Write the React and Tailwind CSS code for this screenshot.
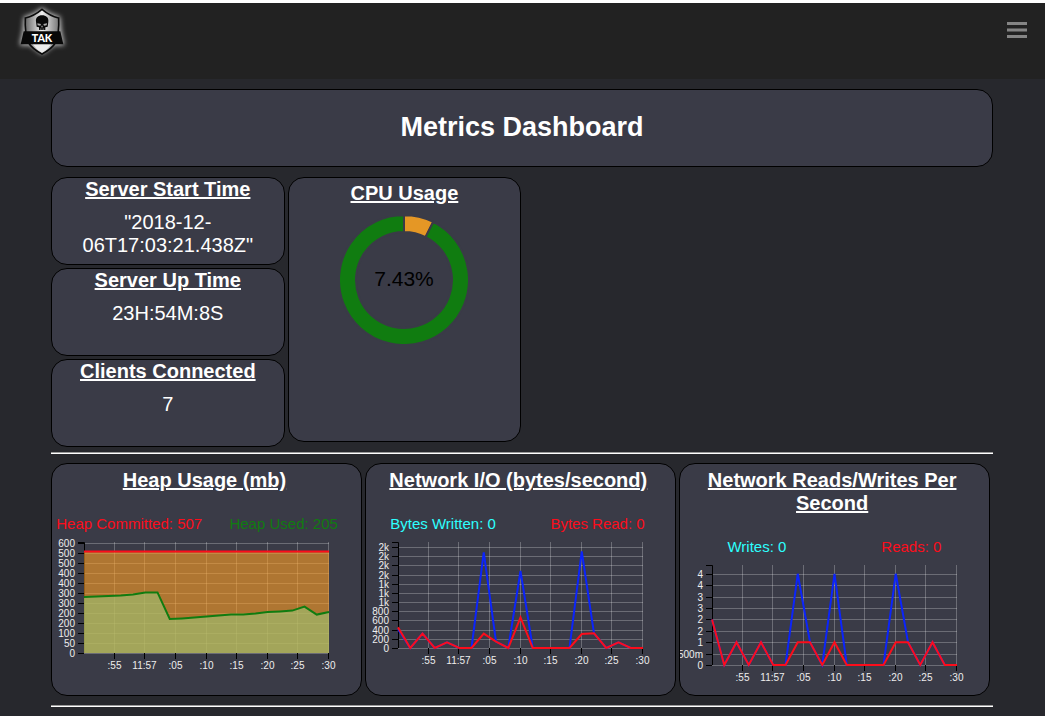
import React from "react";

const PLOT_X = 32;
const PLOT_WIDTH = 245;
const TIMES = [":55", "11:57", ":05", ":10", ":15", ":20", ":25", ":30"];

const heapUsed = [280, 283, 285, 287, 292, 302, 303, 170, 173, 177, 182, 187, 192, 193, 197, 205, 208, 212, 232, 192, 205];
const heapCommitted = heapUsed.map(() => 507);
const bytesRead = [450, 0, 313, 0, 124, 0, 0, 313, 138, 0, 669, 0, 0, 0, 0, 305, 320, 0, 124, 0, 0];
const bytesWritten = [410, 0, 313, 0, 124, 0, 0, 2087, 138, 0, 1680, 0, 0, 0, 0, 2109, 320, 0, 124, 0, 0];
const reads = [2, 0, 1, 0, 1, 0, 0, 1, 1, 0, 1, 0, 0, 0, 0, 1, 1, 0, 1, 0, 0];
const writes = [2, 0, 1, 0, 1, 0, 0, 4, 1, 0, 4, 0, 0, 0, 0, 4, 1, 0, 1, 0, 0];

function Logo() {
  return (
    <svg viewBox="0 0 180 180" className="size-[60px]" role="img" aria-label="TAK">
      <defs>
        <filter id="glow" x="-30%" y="-30%" width="160%" height="160%">
          <feGaussianBlur stdDeviation="8" />
        </filter>
        <linearGradient id="steel" x1="0" y1="0" x2="1" y2="0">
          <stop offset="0" stopColor="#666" />
          <stop offset="0.5" stopColor="#f0f0f0" />
          <stop offset="1" stopColor="#777" />
        </linearGradient>
      </defs>
      <path d="M90 20Q66 40 38 46Q36 68 34 88L26 127H54L90 154L126 127H154L146 88Q144 68 142 46Q114 40 90 20Z" fill="#c8c8c8" stroke="#c8c8c8" strokeWidth="5" filter="url(#glow)" />
      <path d="M90 22Q66 42 40 48Q38 90 48 120Q60 140 90 156Q120 140 132 120Q142 90 140 48Q114 42 90 22Z" fill="url(#steel)" stroke="#0a0a0a" strokeWidth="5" />
      <path d="M62 127H118Q108 142 90 151Q72 142 62 127Z" fill="#ececec" />
      <path d="M35 88H145L154 127H26Z" fill="#080808" />
      <path d="M72 59C70 47 79 40 90 40C102 40 111 47 109 59L107 74L100 76V84H81V76L74 74Z" fill="#080808" />
      <path d="M76 64L87 66L85 71L77 70ZM105 64L94 66L96 71L104 70ZM90 70L93 76H87Z" fill="#aaa" />
      <path d="M85 79V84M90 79V84M95 79V84" stroke="#bbb" strokeWidth="1.5" />
      <text x="90" y="119" textAnchor="middle" fill="#fff" fontSize="32" fontWeight="900" fontFamily="Lato, sans-serif">TAK</text>
    </svg>
  );
}

function Card({ title, className = "", titleClassName = "", children }) {
  return (
    <section className={`overflow-hidden rounded-[16px] border border-black bg-[#3a3b47] text-center ${className}`}>
      <h2 className={`text-[20px] leading-[23px] font-bold underline ${titleClassName}`}>{title}</h2>
      {children}
    </section>
  );
}

function Stat({ title, value }) {
  return (
    <Card title={title} className="min-h-[88px]">
      <p className="mt-[10px] px-4 text-[20px] leading-[23px]">{value}</p>
    </Card>
  );
}

function Donut() {
  const point = (radius, degrees) => {
    const a = (degrees * Math.PI) / 180;
    return `${64 + radius * Math.sin(a)} ${64 - radius * Math.cos(a)}`;
  };
  const arc = (from, to) => {
    const large = to - from > 180 ? 1 : 0;
    return `M${point(65, from)}A65 65 0 ${large} 1 ${point(65, to)}L${point(48, to)}A48 48 0 ${large} 0 ${point(48, from)}Z`;
  };
  return (
    <svg viewBox="0 0 128 128" className="mx-auto mt-[11px] size-32" role="img" aria-label="CPU usage 7.43%">
      <path d={arc(0, 26.7)} fill="#e59725" stroke="#3a3b47" strokeWidth="2" />
      <path d={arc(26.7, 360)} fill="#107c10" stroke="#3a3b47" strokeWidth="2" />
      <text x="64" y="70" textAnchor="middle" fontSize="21" fill="#000">7.43%</text>
    </svg>
  );
}

function TimeChart({ label, height, pitch, step, ticks, series }) {
  const top = 7;
  const bottom = top + height;
  const right = PLOT_X + PLOT_WIDTH;
  const x = (i) => PLOT_X + (i * PLOT_WIDTH) / 20;
  const y = (v) => bottom - (v / step) * pitch;
  const tickY = (i) => Math.round(bottom - i * pitch) + 0.5;
  const timeX = (i) => Math.round(PLOT_X + ((i + 1) * PLOT_WIDTH) / 8) - 0.5;
  const points = (data) => data.map((v, i) => `${x(i)},${y(v)}`).join(" ");
  return (
    <svg width="300" height={height + 30} className="block overflow-hidden" role="img" aria-label={label} fontSize="10" fill="#eee">
      {ticks.map((_, i) => (
        <path key={i} d={`M${PLOT_X} ${tickY(i)}H${right}`} stroke="#fff" strokeOpacity="0.25" />
      ))}
      {TIMES.map((_, i) => (
        <path key={i} d={`M${timeX(i)} ${top}V${bottom}`} stroke="#fff" strokeOpacity="0.25" />
      ))}
      <path d={`M${PLOT_X - 6} ${top + 0.5}H${PLOT_X + 0.5}V${bottom}`} fill="none" stroke="#000" />
      {ticks.map((text, i) => (
        <g key={i}>
          <path d={`M${PLOT_X - 6} ${tickY(i)}H${PLOT_X}`} stroke="#000" />
          <text x={PLOT_X - 9} y={tickY(i) + 3.5} textAnchor="end">{text}</text>
        </g>
      ))}
      {TIMES.map((text, i) => (
        <g key={i}>
          <path d={`M${timeX(i)} ${bottom}v6`} stroke="#000" />
          <text x={timeX(i)} y={bottom + 16} textAnchor="middle">{text}</text>
        </g>
      ))}
      {series.map((s) => s.area && (
        <polygon key={s.color} points={`${PLOT_X},${bottom} ${points(s.data)} ${right},${bottom}`} fill={s.area} fillOpacity={s.areaOpacity} />
      ))}
      {series.map((s) => (
        <polyline key={s.color} points={points(s.data)} fill="none" stroke={s.color} strokeWidth="2" />
      ))}
    </svg>
  );
}

function ChartCard({ title, legend, children }) {
  return (
    <Card title={title} className="min-h-[233px] w-[33%] pt-[5px]" titleClassName="pr-1">
      <div className="mt-[23px] mb-[2px] grid grid-cols-2 text-[15px] leading-[18px] whitespace-nowrap">
        {legend.map(([text, color]) => (
          <span key={text} className={color}>{text}</span>
        ))}
      </div>
      {children}
    </Card>
  );
}

function Rule() {
  return <hr className="h-[2px] border-t border-b border-t-[#9a9a9a] border-b-white" />;
}

export default function App() {
  return (
    <div className="bg-white pt-[3px] font-['Liberation_Sans',Arial,sans-serif] text-white">
      <header className="flex h-[76px] items-start justify-between bg-[#222] pr-[18px] pl-3">
        <a href="#home" className="-mt-px block"><Logo /></a>
        <button type="button" aria-label="Menu" className="mt-[19px]">
          <svg width="20" height="16" viewBox="0 0 20 16" fill="#858585">
            <path d="M0 0H20V3H0ZM0 6.5H20V9.5H0ZM0 13H20V16H0Z" />
          </svg>
        </button>
      </header>
      <main className="bg-[#27282d] pt-[10px] pr-[52px] pb-[9px] pl-[51px]">
        <div className="rounded-[16px] border border-black bg-[#3a3b47] pt-[21px] pb-[23px] text-center">
          <h1 className="text-[27px] leading-[32px] font-bold">Metrics Dashboard</h1>
        </div>

        <div className="mt-[10px] mb-[5px] flex items-start gap-[3px]">
          <div className="flex w-[24.8%] flex-col gap-[3px]">
            <Stat title="Server Start Time" value={'"2018-12-06T17:03:21.438Z"'} />
            <Stat title="Server Up Time" value="23H:54M:8S" />
            <Stat title="Clients Connected" value="7" />
          </div>
          <Card title="CPU Usage" className="min-h-[265px] w-[24.8%] pt-1">
            <Donut />
          </Card>
        </div>

        <Rule />

        <div className="my-[9px] flex gap-[3px]">
          <ChartCard
            title="Heap Usage (mb)"
            legend={[["Heap Committed: 507", "text-[#fc0d1b]"], ["Heap Used: 205", "text-[#107c10]"]]}
          >
            <TimeChart
              label="Heap usage over time"
              height={111}
              pitch={10}
              step={50}
              ticks={["0", "50", "100", "200", "200", "300", "300", "400", "400", "500", "500", "600"]}
              series={[
                { data: heapCommitted, color: "#fc0d1b", area: "#fd9f25", areaOpacity: 0.6 },
                { data: heapUsed, color: "#107c10", area: "#9bc574", areaOpacity: 0.6 },
              ]}
            />
          </ChartCard>
          <ChartCard
            title="Network I/O (bytes/second)"
            legend={[["Bytes Written: 0", "text-[#2dfffe]"], ["Bytes Read: 0", "text-[#fc0d1b]"]]}
          >
            <TimeChart
              label="Network bytes per second over time"
              height={106}
              pitch={9.17}
              step={200}
              ticks={["0", "200", "400", "600", "800", "1k", "1k", "1k", "2k", "2k", "2k", "2k"]}
              series={[
                { data: bytesWritten, color: "#0b24fb" },
                { data: bytesRead, color: "#fc0d1b" },
              ]}
            />
          </ChartCard>
          <ChartCard
            title="Network Reads/Writes Per Second"
            legend={[["Writes: 0", "text-[#2dfffe]"], ["Reads: 0", "text-[#fc0d1b]"]]}
          >
            <TimeChart
              label="Network reads and writes per second over time"
              height={100}
              pitch={11.4}
              step={0.5}
              ticks={["0", "500m", "1", "2", "2", "3", "3", "4", "4"]}
              series={[
                { data: writes, color: "#0b24fb" },
                { data: reads, color: "#fc0d1b" },
              ]}
            />
          </ChartCard>
        </div>

        <Rule />
      </main>
    </div>
  );
}
